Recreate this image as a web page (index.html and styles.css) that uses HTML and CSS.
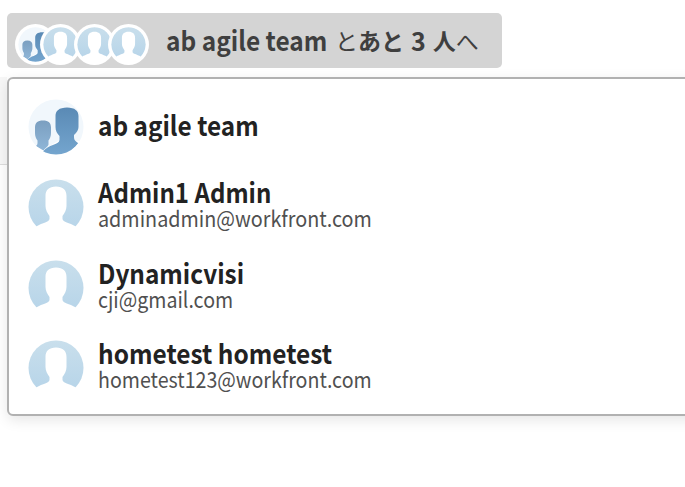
FILE: index.html
```html
<!DOCTYPE html>
<html lang="ja">
<head>
<meta charset="utf-8">
<title>ab agile team</title>
<link rel="stylesheet" href="styles.css">
</head>
<body>
<svg class="defs" aria-hidden="true">
  <defs>
    <linearGradient id="light" x1="0" y1="0" x2="0" y2="1"><stop offset="0" stop-color="#c9dfec"/><stop offset="1" stop-color="#b8d5e9"/></linearGradient>
    <linearGradient id="dark" x1="0" y1="0" x2="0" y2="1"><stop offset="0" stop-color="#5a8ab5"/><stop offset="1" stop-color="#75a6cf"/></linearGradient>
    <linearGradient id="mid" x1="0" y1="0" x2="0" y2="1"><stop offset="0" stop-color="#7b9fc0"/><stop offset="1" stop-color="#8fb6d8"/></linearGradient>
    <clipPath id="round"><circle cx="28" cy="28" r="27.5"/></clipPath>
  </defs>
  <symbol id="user" viewBox="0 0 56 56">
    <g clip-path="url(#round)">
      <path fill="url(#light)" d="M0 0H56V47.500H48C41 43.500 35 43 34.500 40V37C36.500 34 38.500 31 38.500 27V17C38.500 11 35 7.500 28 7.500C21 7.500 17.500 11 17.500 17V27C17.500 31 19.500 34 21.500 37V40C21 43 15 43.500 8 47.500H0Z"/>
    </g>
  </symbol>
  <symbol id="team" viewBox="0 0 56 56">
    <g clip-path="url(#round)">
      <path fill="#f1f7fc" d="M0 0H56V42H30L15 51L0 42Z"/>
      <path fill="url(#mid)" d="M15 21.500C9.500 21.500 7 24 7 28.500V34C7 37 8 39.500 9.500 41.500V44C9.500 46 8.500 46.500 8 47L15.500 51.500C17 49 20.500 47 20.500 45.500V41.500C22 39.500 23 37 23 34V28.500C23 24 20.500 21.500 15 21.500Z"/>
      <path fill="url(#dark)" d="M39 8.500C31 8.500 27.500 12 27.500 17V28C27.500 32 29 34 31.500 37V41C31 46 20 45.500 15 52.500L14 57H38L50.500 44.500C48.500 42.500 46 42 46 38V36C49 33 50.500 31 50.500 28V17C50.500 12 47 8.500 39 8.500Z"/>
    </g>
  </symbol>
</svg>
<div class="page">
  <div class="chip">
    <div class="stack">
      <svg class="mini"><use href="#team"/></svg>
      <svg class="mini second"><use href="#user"/></svg>
      <svg class="mini"><use href="#user"/></svg>
      <svg class="mini"><use href="#user"/></svg>
    </div>
    <div class="summary"><b class="team-name">ab agile team</b><span class="ja"><span>と</span><b>あと</b><b class="count">3</b><b>人</b><span>へ</span></span></div>
  </div>
  <div class="gutter"></div>
  <div class="panel">
    <div class="row"><svg class="avatar"><use href="#team"/></svg><div class="info solo"><div class="name n1">ab agile team</div></div></div>
    <div class="row"><svg class="avatar"><use href="#user"/></svg><div class="info"><div class="name n2">Admin1 Admin</div><div class="mail m2">adminadmin@workfront.com</div></div></div>
    <div class="row"><svg class="avatar"><use href="#user"/></svg><div class="info"><div class="name n3">Dynamicvisi</div><div class="mail m3">cji@gmail.com</div></div></div>
    <div class="row"><svg class="avatar"><use href="#user"/></svg><div class="info"><div class="name n4">hometest hometest</div><div class="mail m4">hometest123@workfront.com</div></div></div>
  </div>
</div>
</body>
</html>
```
FILE: styles.css
```css
* { box-sizing: border-box; }
body { margin: 0; background: #fff; font-family: "Noto Sans CJK JP", sans-serif; overflow: hidden; }
.defs { position: absolute; width: 0; height: 0; }
.page { position: relative; width: 685px; height: 487px; padding: 13px 0 0 7px; overflow: hidden; }
.chip { display: flex; align-items: center; width: 495px; height: 55px; border-radius: 5px; background: #d4d4d4; color: #3f3f3f; }
.stack { display: flex; margin: 7px 0 0 8px; width: 135px; }
.mini { flex: none; width: 41px; height: 41px; padding: 3px; border-radius: 50%; background: #fff; }
.mini + .mini { margin-left: -7px; }
.mini + .second { margin-left: -16px; }
.summary { display: flex; margin: -2px 0 0 16px; line-height: 40px; white-space: nowrap; }
.team-name { width: 169px; font-size: 27px; transform: scaleX(.905); transform-origin: 0 0; }
.ja { display: flex; font-size: 23px; }
.count { margin: 0 7px; font-size: 25px; }
.gutter { position: absolute; left: 0; top: 77px; width: 7px; height: 88px; background: #f7f7f7; border-bottom: 1px solid #ddd; }
.panel { position: relative; width: 720px; height: 339px; margin-top: 9px; padding: 20px 0 0 19px; border: 2px solid #b1b1b1; border-radius: 6px; background: #fff; box-shadow: 0 4px 14px rgba(0,0,0,.1); }
.row { display: flex; height: 80.4px; align-items: flex-start; }
.avatar { flex: none; width: 56px; height: 56px; }
.info { margin: -1px 0 0 14px; white-space: nowrap; }
.solo { padding-top: 13px; }
.name, .mail { width: max-content; transform-origin: 0 0; }
.name { color: #222; font-size: 27px; font-weight: 700; line-height: 28px; }
.mail { margin-top: -1px; color: #505050; font-size: 22px; line-height: 24px; }
.n1 { transform: scaleX(.901); }
.n2 { transform: scaleX(.891); }
.n3 { transform: scaleX(.902); }
.n4 { transform: scaleX(.905); }
.m2 { transform: scaleX(.898); }
.m3 { transform: scaleX(.89); }
.m4 { transform: scaleX(.891); }
```
